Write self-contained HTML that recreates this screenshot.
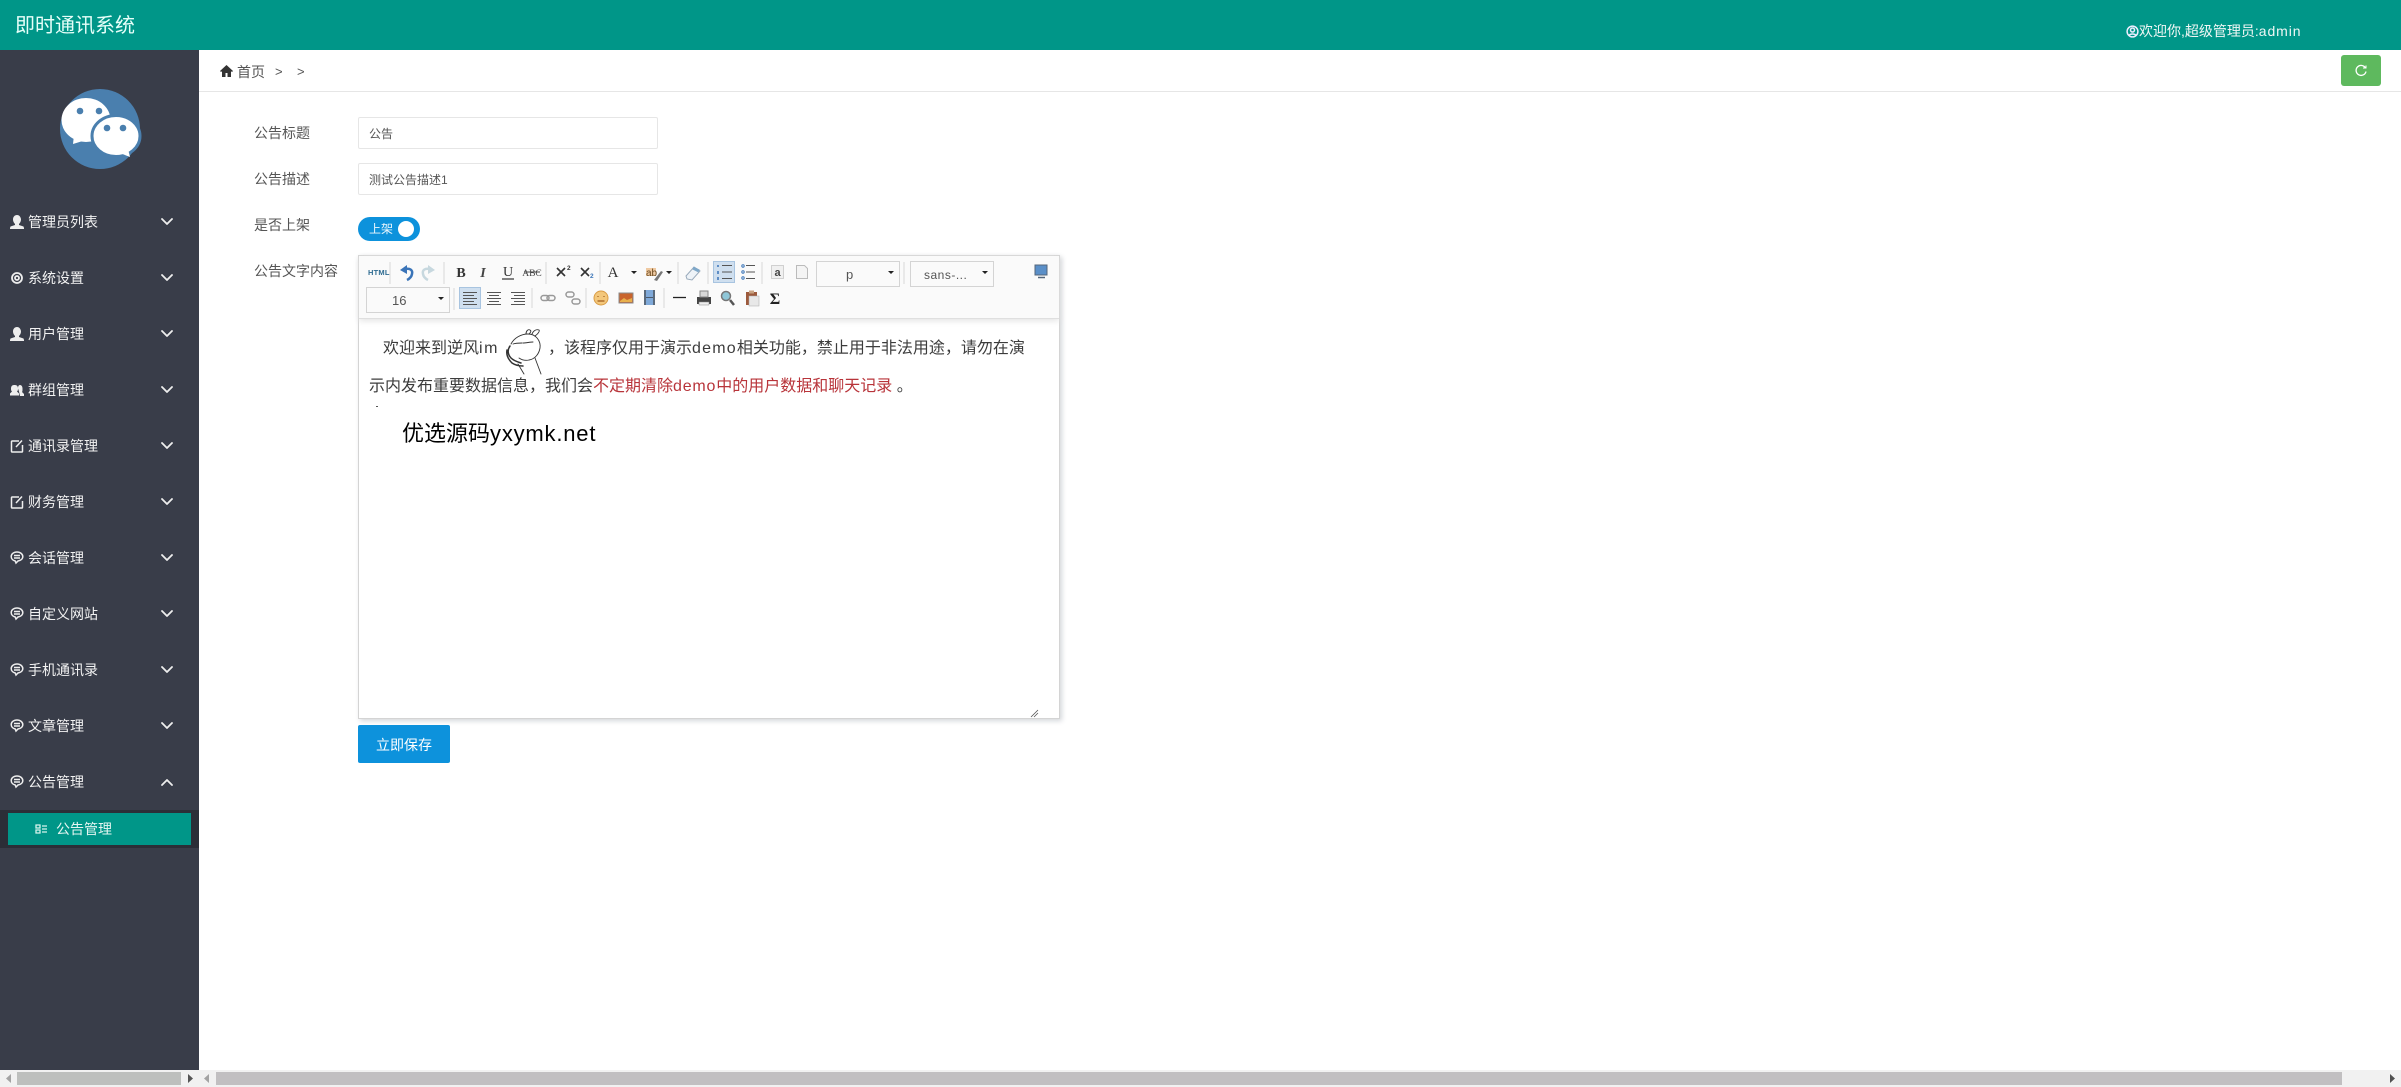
<!DOCTYPE html>
<html lang="zh"><head><meta charset="utf-8"><title>即时通讯系统</title>
<style>
*{box-sizing:border-box}
html,body{margin:0;padding:0;width:2401px;height:1087px;overflow:hidden;background:#fff;font-family:"Liberation Sans","Noto Sans CJK SC",sans-serif;color:#333}
.a{position:absolute;white-space:nowrap}
#hd{left:0;top:0;width:2401px;height:50px;background:#009688}
#sb{left:0;top:50px;width:199px;height:1020px;background:#393d49}
.m{left:28px;font-size:14px;color:#f2f2f2;line-height:20px}
.l{left:254px;font-size:14px;color:#555;line-height:20px}
.ip{left:358px;width:300px;height:32px;border:1px solid #e6e6e6;border-radius:2px;font-size:12px;line-height:32px;padding-left:10px;color:#555}
svg{position:absolute;overflow:visible}
.w{letter-spacing:1px}
</style></head><body>
<div class="a" id="hd"></div>
<div class="a" style="left:15px;top:12px;font-size:20px;line-height:28px;color:#e6fff9">即时通讯系统</div>
<div class="a" style="left:2139px;top:21px;font-size:14px;line-height:20px;color:#f0f7f5">欢迎你,超级管理员:<span style="letter-spacing:.9px">admin</span></div>
<svg style="left:2126px;top:25px" width="13" height="13" viewBox="0 0 13 13" fill="none" stroke="#eef" stroke-width="1.5"><circle cx="6.5" cy="6.5" r="5.4"/><circle cx="6.5" cy="5" r="2"/><path d="M3 10.5c1-2 6-2 7 0"/></svg>

<div class="a" id="sb"></div>
<svg style="left:60px;top:89px" width="80" height="80" viewBox="0 0 80 80"><circle cx="40" cy="40" r="40" fill="#4a7fae"/><ellipse cx="26" cy="31" rx="24.500" ry="22" fill="#fff"/><path d="M14 46l-1 9 13-4z" fill="#fff"/><ellipse cx="56" cy="47" rx="24" ry="20.500" fill="#fff" stroke="#4a7fae" stroke-width="3"/><path d="M60 64l10 4-2-8z" fill="#fff"/><circle cx="20" cy="22" r="3.3" fill="#4a7fae"/><circle cx="39" cy="22" r="3.3" fill="#4a7fae"/><circle cx="47" cy="39" r="3.3" fill="#4a7fae"/><circle cx="63" cy="39" r="3.3" fill="#4a7fae"/></svg>

<div class="a m" style="top:212px">管理员列表</div>
<div class="a m" style="top:268px">系统设置</div>
<div class="a m" style="top:324px">用户管理</div>
<div class="a m" style="top:380px">群组管理</div>
<div class="a m" style="top:436px">通讯录管理</div>
<div class="a m" style="top:492px">财务管理</div>
<div class="a m" style="top:548px">会话管理</div>
<div class="a m" style="top:604px">自定义网站</div>
<div class="a m" style="top:660px">手机通讯录</div>
<div class="a m" style="top:716px">文章管理</div>
<div class="a m" style="top:772px">公告管理</div>
<div class="a" style="left:0;top:810px;width:199px;height:38px;background:#2b2e37"></div>
<div class="a" style="left:8px;top:813px;width:183px;height:32px;background:#009688"></div>
<div class="a m" style="left:56px;top:819px;color:#e4f5f1">公告管理</div>

<svg style="left:0;top:0" width="199" height="860" fill="none" stroke="#eee" stroke-width="1.8">
<g stroke-linecap="round" stroke-linejoin="round">
<path d="M162 219l5 5 5-5M162 275l5 5 5-5M162 331l5 5 5-5M162 387l5 5 5-5M162 443l5 5 5-5M162 499l5 5 5-5M162 555l5 5 5-5M162 611l5 5 5-5M162 667l5 5 5-5M162 723l5 5 5-5M162 785l5-5 5 5"/>
</g>
<g id="ic">
<path d="M17 215c-2.500 0-4 2-4 4.500 0 2 1 3.500 2 4.500l0 1-4.500 1.500-.5 1.500v1h14v-1l-.5-1.500-4.500-1.500v-1c1-1 2-2.500 2-4.500s-1.500-4.500-4-4.500z" fill="#eee" stroke="none"/>
<circle cx="17" cy="278" r="5"/><circle cx="17" cy="278" r="2"/>
<path d="M17 327c-2.500 0-4 2-4 4.500 0 2 1 3.500 2 4.500l0 1-4.500 1.500-.5 1.500v1h14v-1l-.5-1.500-4.500-1.500v-1c1-1 2-2.500 2-4.500s-1.500-4.500-4-4.500z" fill="#eee" stroke="none"/>
<path d="M14 385c-2 0-3 1.500-3 3.500s.5 2.500 1 3l-2 2v2h9v-2l-2-2c.5-.5 1-1 1-3s-1-3.500-3-3.500zM20 385c-1.500 0-2 1.500-2 3.500l1 3 1 4.500h4V394l-2-2c.5-.5 .5-1.500 .5-3.500s-1-3.500-2.500-3.500z" fill="#eee" stroke="none"/>
<g stroke-width="1.5">
<path d="M19 441h-6.500a.8.800 0 0 0-1 1v9a.8.800 0 0 0 1 1h9a.8.800 0 0 0 1-1v-6M16 447l6-6.500"/>
<path d="M19 497h-6.500a.8.800 0 0 0-1 1v9a.8.800 0 0 0 1 1h9a.8.800 0 0 0 1-1v-6M16 503l6-6.500"/>
<path d="M17 552c-3.300 0-5.800 2-5.800 4.500s2 4 4 4.500l.8 2 2-2c2.800-.5 4.800-2.200 4.800-4.500S20.300 552 17 552zM14 555.500h6M14 558h6"/>
<path d="M17 608c-3.300 0-5.800 2-5.800 4.500s2 4 4 4.500l.8 2 2-2c2.800-.5 4.800-2.200 4.800-4.500S20.300 608 17 608zM14 611.500h6M14 614h6"/>
<path d="M17 664c-3.300 0-5.800 2-5.800 4.500s2 4 4 4.500l.8 2 2-2c2.800-.5 4.800-2.200 4.800-4.500S20.300 664 17 664zM14 667.500h6M14 670h6"/>
<path d="M17 720c-3.300 0-5.800 2-5.800 4.500s2 4 4 4.500l.8 2 2-2c2.800-.5 4.800-2.200 4.800-4.500S20.300 720 17 720zM14 723.500h6M14 726h6"/>
<path d="M17 776c-3.300 0-5.800 2-5.800 4.500s2 4 4 4.500l.8 2 2-2c2.800-.5 4.800-2.200 4.800-4.500S20.300 776 17 776zM14 779.500h6M14 782h6"/>
</g>
<path d="M36 825h4v3h-4zM36 830h4v3h-4zM42 826h5M42 829h5M42 832h5" stroke="#d6f3ec" stroke-width="1.300"/>
</g></svg>

<!-- breadcrumb -->
<div class="a" style="left:199px;top:91px;width:2202px;height:1px;background:#e6e6e6"></div>
<svg style="left:220px;top:65px" width="13" height="12" viewBox="0 0 13 12"><path d="M6.500 0L0 6l1 1 1-.8V12h3.500V8h2v4H11V6.200l1 .8 1-1z" fill="#333"/></svg>
<div class="a" style="left:237px;top:62px;font-size:14px;line-height:20px;color:#555">首页</div>
<div class="a" style="left:275px;top:62px;font-size:13px;line-height:20px;color:#555">&gt;</div>
<div class="a" style="left:297px;top:62px;font-size:13px;line-height:20px;color:#555">&gt;</div>
<div class="a" style="left:2341px;top:55px;width:40px;height:31px;background:#5eb95e;border-radius:3px"></div>
<svg style="left:2354px;top:64px" width="14" height="14" viewBox="0 0 14 14" fill="none" stroke="#fff" stroke-width="1.300"><path d="M11.500 4A5 5 0 1 0 12 7.500"/><path d="M9 4h3V1.500" stroke-width="1"/></svg>

<!-- form -->
<div class="a l" style="top:123px">公告标题</div>
<div class="a l" style="top:169px">公告描述</div>
<div class="a l" style="top:215px">是否上架</div>
<div class="a l" style="top:261px">公告文字内容</div>
<div class="a ip" style="top:117px">公告</div>
<div class="a ip" style="top:163px">测试公告描述1</div>
<div class="a" style="left:358px;top:217px;width:62px;height:24px;border-radius:12px;background:#0d92dc"></div>
<div class="a" style="left:369px;top:219px;font-size:12px;line-height:20px;color:#eaf6fd">上架</div>
<div class="a" style="left:398px;top:221px;width:16px;height:16px;border-radius:50%;background:#fff"></div>

<!-- editor -->
<div class="a" style="left:358px;top:255px;width:702px;height:464px;background:#fff;border:1px solid #d4d4d4;box-shadow:2px 2px 5px #d3d6da"></div>
<div class="a" style="left:359px;top:256px;width:700px;height:63px;background:#fafafa;border-bottom:1px solid #dfdfdf;box-shadow:0 2px 6px #e4e4e4"></div>

<div class="a" style="left:713px;top:261px;width:22px;height:22px;background:#cfdfef;border:1px solid #a8c4e0"></div>
<div class="a" style="left:459px;top:287px;width:22px;height:22px;background:#cfdfef;border:1px solid #a8c4e0"></div>
<div class="a" style="left:816px;top:261px;width:84px;height:26px;border:1px solid #d4d4d4;background:#fafafa;font-size:13px;line-height:26px;color:#555;padding-left:29px">p</div>
<div class="a" style="left:910px;top:261px;width:84px;height:26px;border:1px solid #d4d4d4;background:#fafafa;font-size:12px;line-height:26px;color:#555;padding-left:13px;letter-spacing:.5px">sans-...</div>
<div class="a" style="left:366px;top:287px;width:84px;height:26px;border:1px solid #d4d4d4;background:#fafafa;font-size:13px;line-height:26px;color:#555;padding-left:25px">16</div>

<svg style="left:0;top:0" width="1100" height="380" fill="none">
<!-- separators -->
<path d="M390 262v22M444 262v22M546 262v22M600 262v22M678 262v22M708 262v22M762 262v22M904 262v22M454 288v22M532 288v20M586 288v20M664 288v20" stroke="#d8d8d8"/>
<!-- carets -->
<path d="M631 271h6l-3 3zM666 271h6l-3 3zM888 271h6l-3 3zM982 271h6l-3 3zM438 297h6l-3 3z" fill="#222"/>
<text x="368" y="275" font-family="Liberation Sans" font-size="7.500" font-weight="700" fill="#2f6c92" letter-spacing=".2">HTML</text>
<!-- undo redo -->
<path d="M400 270l7-5v9z" fill="#3a74b8"/><path d="M405 269c5-1 8 1 7 5-.5 3-3 5-5 6" stroke="#3a74b8" stroke-width="2.500"/>
<path d="M435 270l-7-5v9z" fill="#c7d8df"/><path d="M430 269c-5-1-8 1-7 5 .5 3 3 5 5 6" stroke="#c7d8df" stroke-width="2.500"/>
<text x="461" y="277" text-anchor="middle" font-family="Liberation Serif" font-size="14" font-weight="700" fill="#333">B</text>
<text x="483" y="277" text-anchor="middle" font-family="Liberation Serif" font-size="14" font-style="italic" font-weight="700" fill="#444">I</text>
<text x="508" y="276" text-anchor="middle" font-family="Liberation Serif" font-size="14" fill="#333">U</text><path d="M502 279h12" stroke="#333" stroke-width="1.200"/>
<text x="532" y="276" text-anchor="middle" font-family="Liberation Serif" font-size="9.500" fill="#444">ABC</text><path d="M524 272h16" stroke="#444"/>
<path d="M557 268l8 8M565 268l-8 8M581 268l8 8M589 268l-8 8" stroke="#333" stroke-width="1.600"/>
<text x="567" y="270" font-family="Liberation Sans" font-size="6.500" font-weight="700" fill="#333">2</text>
<text x="590" y="278" font-family="Liberation Sans" font-size="6.500" font-weight="700" fill="#3a74b8">2</text>
<text x="613" y="277" text-anchor="middle" font-family="Liberation Serif" font-size="15" fill="#333">A</text>
<path d="M646 268h10v8h-10z" fill="#e9b47a" opacity=".7"/><text x="646" y="276" font-family="Liberation Sans" font-size="10" fill="#6a4a20">ab</text><path d="M654 280l7-9 2 1-6 9z" fill="#777"/>
<path d="M686 276l8-9 6 4-8 9-5-1z" stroke="#9ab" fill="#eef3f8"/><path d="M693 268l6 3" stroke="#7fa8c9" stroke-width="3"/>
<!-- lists -->
<path d="M722 265.500h10M722 272h10M722 278.500h10M746 265.500h9M746 272h9M746 278.500h9" stroke="#555"/>
<path d="M718 265v2M718 271v3M718 277v3" stroke="#3a74b8" stroke-width="1.500"/>
<circle cx="743" cy="266" r="1.200" stroke="#3a74b8"/><circle cx="743" cy="272" r="1.200" stroke="#3a74b8"/><circle cx="743" cy="278" r="1.200" stroke="#3a74b8"/>
<rect x="771.500" y="265.500" width="12" height="13" stroke="#aaa" stroke-dasharray="1 1" fill="#f0f0f0"/>
<text x="777.500" y="276" text-anchor="middle" font-family="Liberation Sans" font-size="11" font-weight="700" fill="#444">a</text>
<path d="M796.500 265.500h8l3 3v10h-11z" stroke="#bbb" fill="#f4f4f4"/>
<rect x="1035" y="265" width="12" height="10" fill="#5a8fc8" stroke="#54667a"/><path d="M1038 277.500h7" stroke="#54667a" stroke-width="1.500"/>
<!-- row 2 -->
<path d="M463 292.500h14M463 295.500h11M463 298.500h14M463 301.500h11M463 304.500h14M487 292.500h14M489 295.500h10M487 298.500h14M489 301.500h10M487 304.500h14M511 292.500h14M514 295.500h11M511 298.500h14M514 301.500h11M511 304.500h14" stroke="#555"/>
<rect x="541" y="295.500" width="8" height="5" rx="2.500" stroke="#999" stroke-width="1.500"/><rect x="547" y="295.500" width="8" height="5" rx="2.500" stroke="#999" stroke-width="1.500"/>
<rect x="566" y="292" width="8" height="5" rx="2.500" stroke="#999" stroke-width="1.500"/><rect x="572" y="299" width="8" height="5" rx="2.500" stroke="#999" stroke-width="1.500"/>
<circle cx="601" cy="298" r="7" fill="#f3c77b" stroke="#d99c45"/><path d="M598 296v1M604 296v1M597.500 301h7" stroke="#a05d1d" stroke-width="1.200"/>
<rect x="619" y="293" width="14" height="10" fill="#c9642c" stroke="#8a8a8a"/><path d="M620 301l4-3 3 2 5-2v4h-12z" fill="#e8b04c"/>
<rect x="644" y="290" width="11" height="15" fill="#7fa9d9"/><path d="M645 290v15M654 290v15" stroke="#5a6a7c" stroke-width="2"/><path d="M646 297.500h7" stroke="#4a5a6c"/>
<path d="M673 297.500h13" stroke="#222" stroke-width="1.300"/>
<path d="M697 297h14v7h-14z" fill="#444"/><path d="M700 291h8v6h-8z" fill="#d8d8d8" stroke="#888"/><path d="M699 302h10v3h-10z" fill="#eee" stroke="#888" stroke-width=".5"/>
<circle cx="726" cy="296" r="4.500" fill="#8fc7d8" stroke="#777" stroke-width="1.500"/><path d="M730 300l4 5" stroke="#555" stroke-width="2.500"/>
<rect x="746" y="292" width="11" height="13" fill="#9c5a3c"/><rect x="749" y="296" width="10" height="10" fill="#e8e8e8" stroke="#aaa" stroke-width=".5"/><rect x="749" y="290.500" width="5" height="3" fill="#c9a382"/>
<text x="775" y="304" text-anchor="middle" font-family="Liberation Serif" font-size="16" font-weight="700" fill="#222">Σ</text>
<!-- doodle -->
<g stroke="#333" stroke-width=".9" stroke-linecap="round">
<path d="M511 344c3-6 10-10 17-10 8 0 13 7 12 14-1 6-5 11-11 12-4 1-7 0-10-2"/>
<path d="M526 334c0-3 2-5 4-4 2 1 0 3-1 4M532 334c1-3 4-5 7-4 1 1-1 4-4 6"/>
<path d="M513 344c3-1 6-1 9-1M523 343c3 0 7-1 10-1"/>
<path d="M510 346c-3 4-2 9 1 12 3 3 7 4 10 5M507 350c-1 5 1 9 5 13 3 2 7 3 11 3" stroke-width="1.500"/>
<path d="M518 364l6 10M535 358l6 16"/>
</g>
<path d="M1031 717l7-7M1034 717l4-4" stroke="#555" stroke-width=".8"/>
</svg>

<!-- editor text -->
<div class="a" style="left:383px;top:337px;font-size:16px;line-height:24px;color:#3c3c3c">欢迎来到逆风<span style="letter-spacing:1.500px">im</span></div>
<div class="a" style="left:548px;top:337px;font-size:16px;line-height:24px;color:#3c3c3c">，该程序仅用于演示<span style="letter-spacing:1.200px">demo</span>相关功能，禁止用于非法用途，请勿在演</div>
<div class="a" style="left:369px;top:375px;font-size:16px;line-height:24px;color:#3c3c3c">示内发布重要数据信息，我们会<span style="color:#b8343a">不定期清除<span style="letter-spacing:.8px">demo</span>中的用户数据和聊天记录</span> 。</div>
<div class="a" style="left:376px;top:406px;width:2px;height:1px;background:#555"></div>
<div class="a" style="left:402px;top:418px;font-size:22px;line-height:32px;color:#000">优选源码<span style="letter-spacing:.8px">yxymk.net</span></div>

<div class="a" style="left:358px;top:725px;width:92px;height:38px;background:#0d92dc;border-radius:2px;color:#fff;font-size:14px;line-height:40px;text-align:center">立即保存</div>

<!-- scrollbars -->
<div class="a" style="left:0;top:1070px;width:2401px;height:17px;background:#f1f1f1"></div>
<div class="a" style="left:17px;top:1072px;width:164px;height:13px;background:#bdbfbd"></div>
<div class="a" style="left:216px;top:1072px;width:2126px;height:13px;background:#c1bfc1"></div>
<svg style="left:0;top:1070px" width="2401" height="17"><path d="M188 4v9l5-4.500z" fill="#555"/><path d="M11 4v9l-5-4.500z" fill="#a3a3a3"/><path d="M209 4v9l-5-4.500z" fill="#a3a3a3"/><path d="M2390 4v9l5-4.500z" fill="#505050"/></svg>
</body></html>
